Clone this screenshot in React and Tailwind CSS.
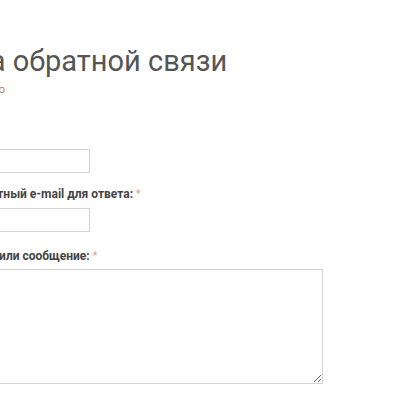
export default function App() {
  return (
    <div className="w-[400px] h-[400px] bg-white overflow-hidden relative">
      <div className="pt-[42px]">
        <h1 className="-ml-[87px] whitespace-nowrap text-[29px] leading-[38px] text-[#555555] font-['Roboto',sans-serif]">
          Форма обратной связи
        </h1>
        <p className="mt-[1px] -ml-[86px] whitespace-nowrap text-[11px] leading-[16px] text-[#b5735f] font-['Open_Sans',sans-serif]">
          * — обязательно
        </p>
        <div className="mt-[29px] -ml-[80px] whitespace-nowrap text-[12px] leading-[16px] font-bold text-[#444] font-['Roboto',sans-serif]">
          Ваше имя: <span className="text-[#e8a090] text-[10px] align-top">*</span>
        </div>
        <div className="mt-[7px] -ml-[150px] w-[240px] h-[24px] border border-[#d4d4d4] bg-white"></div>
        <div className="mt-[13px] -ml-[69px] whitespace-nowrap text-[12px] leading-[16px] font-bold text-[#444] font-['Roboto',sans-serif]">
          Ваш контактный e-mail для ответа: <span className="text-[#e8a090] text-[10px] align-top">*</span>
        </div>
        <div className="mt-[6px] -ml-[150px] w-[240px] h-[24px] border border-[#d4d4d4] bg-white"></div>
        <div className="mt-[16px] -ml-[71px] whitespace-nowrap text-[12px] leading-[16px] font-bold text-[#444] font-['Roboto',sans-serif]">
          Ваш вопрос или сообщение: <span className="text-[#e8a090] text-[10px] align-top">*</span>
        </div>
        <textarea className="block mt-[5px] -ml-[150px] w-[473px] h-[115px] border border-[#d4d4d4] bg-white resize-y" />
      </div>
    </div>
  );
}
